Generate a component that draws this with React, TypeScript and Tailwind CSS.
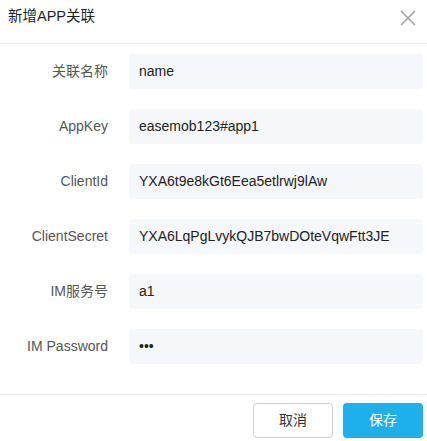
const fields = [
  { label: "关联名称", value: "name" },
  { label: "AppKey", value: "easemob123#app1" },
  { label: "ClientId", value: "YXA6t9e8kGt6Eea5etlrwj9lAw" },
  { label: "ClientSecret", value: "YXA6LqPgLvykQJB7bwDOteVqwFtt3JE" },
  { label: "IM服务号", value: "a1" },
  { label: "IM Password", value: "•••" },
];

const App = () => {
  return (
    <div
      className="w-[427px] h-[441px] bg-white flex flex-col"
      style={{ fontFamily: '"Liberation Sans", "Noto Sans CJK SC", sans-serif' }}
    >
      {/* Header */}
      <div className="h-[44px] flex items-center justify-between pl-2 pr-[11px] border-b border-[#e8eaee]">
        <span className="text-[14.5px] text-[#1f1f1f] -mt-[9px]">新增APP关联</span>
        <svg width="16" height="16" viewBox="0 0 16 16" className="-mt-[7px]">
          <path d="M1 1 L15 15 M15 1 L1 15" stroke="#a0a0a0" strokeWidth="1.6" fill="none" />
        </svg>
      </div>

      {/* Form */}
      <div className="flex flex-col gap-[20px] pt-[10px] pb-[30px]">
        {fields.map((f) => (
          <div key={f.label} className="flex items-center">
            <label className="w-[108px] text-right text-[14px] text-[#555]">{f.label}</label>
            <div className="ml-[21px] w-[294px] h-[35px] rounded-[4px] bg-[#f5f7fa] flex items-center pl-[10px] text-[14px] text-[#222]">
              {f.value}
            </div>
          </div>
        ))}
      </div>

      {/* Footer */}
      <div className="border-t border-[#e8eaee] flex justify-end gap-[10px] pt-[8px] pr-[4px]">
        <button className="w-[80px] h-[35px] rounded-[4px] border border-[#d0d0d0] bg-white text-[14px] text-[#333]">
          取消
        </button>
        <button className="w-[80px] h-[35px] rounded-[4px] bg-[#1eb0ec] text-[14px] text-white">
          保存
        </button>
      </div>
    </div>
  );
};

export default App;
